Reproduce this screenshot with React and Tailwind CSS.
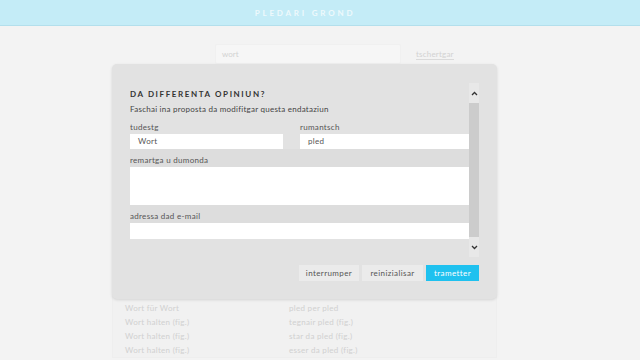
import React from "react";

const font = { fontFamily: "Lato, 'Open Sans', sans-serif" };

const rows = [
  ["Wort für Wort", "pled per pled"],
  ["Wort halten (fig.)", "tegnair pled (fig.)"],
  ["Wort halten (fig.)", "star da pled (fig.)"],
  ["Wort halten (fig.)", "esser da pled (fig.)"],
];

function Field({ label, value, className = "" }) {
  return (
    <div className={"flex flex-col " + className}>
      <div className="h-[13px] text-[8px] leading-[13px] text-[#555] tracking-[0.3px]">{label}</div>
      <div className="h-[15px] bg-white px-[8px] text-[8px] leading-[15px] text-[#555] tracking-[0.3px]">{value}</div>
    </div>
  );
}

function Scrollbar() {
  return (
    <div className="flex w-[10px] flex-col">
      <div className="flex h-[20px] items-center justify-center bg-[#e8e8e8]">
        <svg width="7" height="5" viewBox="0 0 7 5" fill="none" stroke="#333" strokeWidth="1.3">
          <path d="M1 4 L3.5 1.5 L6 4" />
        </svg>
      </div>
      <div className="flex-1 bg-[#cccccc]" />
      <div className="flex h-[20px] items-center justify-center bg-[#e8e8e8]">
        <svg width="7" height="5" viewBox="0 0 7 5" fill="none" stroke="#333" strokeWidth="1.3">
          <path d="M1 1 L3.5 3.5 L6 1" />
        </svg>
      </div>
    </div>
  );
}

export default function App() {
  return (
    <div className="relative h-[360px] w-[640px] overflow-hidden bg-[#f3f3f3]" style={font}>
      <header className="flex h-[26px] items-center justify-center border-b border-[#b3dfec] bg-[#c4ecf7]">
        <span className="mr-[30px] text-[8px] font-bold tracking-[2.8px] text-[#eef9fc]">PLEDARI GROND</span>
      </header>

      {/* background page, dimmed */}
      <div className="mt-[18px] flex items-center pl-[215px]">
        <div className="flex h-[20px] w-[186px] items-center rounded-[2px] border border-[#f0f0f0] bg-[#f6f6f6] px-[6px] text-[8px] text-[#d2d2d2]">
          wort
        </div>
        <span className="ml-[15px] border-b border-[#dadada] text-[8px] leading-[10px] tracking-[0.2px] text-[#d2d2d2]">tschertgar</span>
      </div>

      <div className="ml-[112px] mt-[230px] w-[385px] border border-[#eeeeee] bg-[#f1f1f1] px-[12px] pt-[6px]">
        {rows.map(([de, rm], i) => (
          <div key={i} className="flex h-[14px] items-center text-[8px] tracking-[0.3px] text-[#d0d0d0]">
            <span className="w-[164px]">{de}</span>
            <span>{rm}</span>
          </div>
        ))}
      </div>

      {/* modal */}
      <div className="absolute left-[112px] top-[64px] flex h-[235px] w-[385px] flex-col rounded-[5px] bg-[#e2e2e2] pl-[18px] pr-[18px] pt-[19px] shadow-[0_1px_3px_rgba(0,0,0,0.12)]">
        <div className="flex h-[174px]">
          <div className="w-[339px] overflow-hidden">
            <div className="pt-[6px] text-[8px] font-bold leading-[10px] tracking-[1.6px] text-[#333]">DA DIFFERENTA OPINIUN?</div>
            <div className="mt-[5px] text-[8px] leading-[10px] tracking-[0.25px] text-[#444]">
              Faschai ina proposta da modifitgar questa endataziun
            </div>
            <div className="mt-[7px] flex">
              <Field label="tudestg" value="Wort" className="w-[153px]" />
              <Field label="rumantsch" value="pled" className="ml-[17px] flex-1" />
            </div>
            <div className="flex flex-col bg-[#dddddd]">
              <div className="h-[18px] pt-[6px] text-[8px] leading-[10px] text-[#555] tracking-[0.3px]">remartga u dumonda</div>
              <div className="h-[38px] bg-white" />
            </div>
            <div className="flex flex-col bg-[#dddddd]">
              <div className="h-[18px] pt-[6px] text-[8px] leading-[10px] text-[#555] tracking-[0.3px]">adressa dad e-mail</div>
              <div className="h-[16px] bg-white" />
            </div>
          </div>
          <Scrollbar />
        </div>
        <div className="mt-[8px] flex justify-end gap-[3px]">
          <button className="h-[16px] w-[60px] bg-[#ebebeb] text-[8px] tracking-[0.4px] text-[#555]">interrumper</button>
          <button className="h-[16px] w-[61px] bg-[#ebebeb] text-[8px] tracking-[0.4px] text-[#555]">reinizialisar</button>
          <button className="h-[16px] w-[53px] bg-[#1fc1ef] text-[8px] tracking-[0.4px] text-white">trametter</button>
        </div>
      </div>
    </div>
  );
}
